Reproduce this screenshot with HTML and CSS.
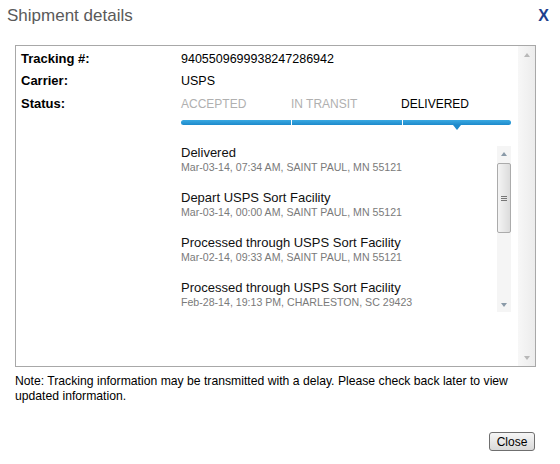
FILE: index.html
```html
<!DOCTYPE html>
<html>
<head>
<meta charset="utf-8">
<link rel="stylesheet" href="styles.css">
</head>
<body>
<div class="dialog">
  <div class="header">
    <h1 class="title">Shipment details</h1>
    <span class="close-x">X</span>
  </div>
  <div class="box">
    <div class="box-content">
      <div class="row"><div class="label">Tracking #:</div><div class="value">9405509699938247286942</div></div>
      <div class="row"><div class="label">Carrier:</div><div class="value">USPS</div></div>
      <div class="row status-row">
        <div class="label">Status:</div>
        <div class="value status">
          <div class="steps">
            <span class="step">ACCEPTED</span>
            <span class="step">IN TRANSIT</span>
            <span class="step current">DELIVERED</span>
          </div>
          <div class="bar">
            <span class="seg first"></span>
            <span class="seg"></span>
            <span class="seg last current"></span>
          </div>
          <div class="events-wrap">
            <div class="events">
              <div class="event">
                <div class="ev-title">Delivered</div>
                <div class="ev-sub">Mar-03-14, 07:34 AM, SAINT PAUL, MN 55121</div>
              </div>
              <div class="event">
                <div class="ev-title">Depart USPS Sort Facility</div>
                <div class="ev-sub">Mar-03-14, 00:00 AM, SAINT PAUL, MN 55121</div>
              </div>
              <div class="event">
                <div class="ev-title">Processed through USPS Sort Facility</div>
                <div class="ev-sub">Mar-02-14, 09:33 AM, SAINT PAUL, MN 55121</div>
              </div>
              <div class="event">
                <div class="ev-title">Processed through USPS Sort Facility</div>
                <div class="ev-sub">Feb-28-14, 19:13 PM, CHARLESTON, SC 29423</div>
              </div>
            </div>
            <div class="vscroll">
              <div class="sbtn"><span class="arr up"></span></div>
              <div class="thumb"><span class="grip"></span></div>
              <div class="track"></div>
              <div class="sbtn"><span class="arr down"></span></div>
            </div>
          </div>
        </div>
      </div>
    </div>
    <div class="outer-scroll">
      <div class="sbtn"><span class="arr up light"></span></div>
      <div class="track"></div>
      <div class="sbtn"><span class="arr down light"></span></div>
    </div>
  </div>
  <p class="note">Note: Tracking information may be transmitted with a delay. Please check back later to view updated information.</p>
  <div class="footer"><button class="btn">Close</button></div>
</div>
</body>
</html>
```
FILE: styles.css
```css
html, body {
  margin: 0;
  padding: 0;
  background: #fff;
}
body {
  font-family: "Liberation Sans", Arial, sans-serif;
  color: #000;
}
.dialog {
  width: 560px;
  height: 464px;
  box-sizing: border-box;
}
.header {
  display: flex;
  justify-content: space-between;
  align-items: flex-start;
  height: 45px;
  box-sizing: border-box;
  padding: 6px 11px 0 7px;
}
.title {
  margin: 0;
  font-size: 17px;
  line-height: 20px;
  font-weight: normal;
  color: #5a5a5a;
}
.close-x {
  font-size: 16px;
  font-weight: bold;
  line-height: 18px;
  margin-top: 1px;
  color: #1d3f8e;
}
.box {
  margin: 0 24px 0 15px;
  height: 322px;
  box-sizing: border-box;
  border: 1px solid #a8a8a8;
  display: flex;
}
.box-content {
  flex: 1;
  padding: 2px 0 0 5px;
}
.row {
  display: flex;
  line-height: 22px;
}
.status-row {
  margin-top: 1px;
}
.label {
  width: 160px;
  flex: none;
  font-size: 13px;
  font-weight: bold;
}
.value {
  font-size: 12.5px;
}
.status {
  width: 330px;
}
.steps {
  display: grid;
  grid-template-columns: 110px 110px 110px;
  font-size: 12px;
  line-height: 22px;
}
.step {
  color: #b0b0b0;
}
.step.current {
  color: #000;
}
.bar {
  display: flex;
  gap: 1px;
  height: 5px;
  margin-top: 5px;
}
.seg {
  flex: 1;
  background: linear-gradient(#3aa9e2, #1d8acb);
  position: relative;
}
.seg.first {
  border-radius: 3px 0 0 3px;
}
.seg.last {
  border-radius: 0 3px 3px 0;
  flex: 0 0 108px;
}
.seg.current::after {
  content: "";
  position: absolute;
  left: 50%;
  top: 5px;
  margin-left: -4px;
  border-left: 4px solid transparent;
  border-right: 4px solid transparent;
  border-top: 5px solid #1d8acb;
}
.events-wrap {
  display: flex;
  margin-top: 20px;
  height: 167px;
  line-height: normal;
}
.events {
  flex: 1;
  overflow: hidden;
}
.event {
  margin-bottom: 15px;
}
.ev-title {
  font-size: 13px;
  line-height: 15px;
  color: #111;
}
.ev-sub {
  font-size: 10.6px;
  line-height: 15px;
  color: #7a7a7a;
}
.vscroll {
  width: 14px;
  margin-top: 1px;
  height: 166px;
  display: flex;
  flex-direction: column;
  background: #f5f5f5;
}
.sbtn {
  height: 15px;
  display: flex;
  align-items: center;
  justify-content: center;
}
.arr {
  width: 0;
  height: 0;
  border-left: 3px solid transparent;
  border-right: 3px solid transparent;
}
.arr.up {
  border-bottom: 4px solid #8a9aa8;
}
.arr.down {
  border-top: 4px solid #8a9aa8;
}
.arr.light.up {
  border-bottom-color: #b8b8b8;
}
.arr.light.down {
  border-top-color: #b8b8b8;
}
.thumb {
  height: 70px;
  margin-top: 2px;
  box-sizing: border-box;
  border: 1px solid #ababab;
  border-radius: 2px;
  background: linear-gradient(90deg, #f4f4f4, #dcdcdc);
  display: flex;
  align-items: center;
  justify-content: center;
}
.grip {
  width: 6px;
  height: 5px;
  border-top: 1px solid #777;
  border-bottom: 1px solid #777;
  box-sizing: border-box;
  background: linear-gradient(#fff 1px, #777 1px, #777 2px, #fff 2px);
  background-clip: content-box;
  padding: 1px 0;
}
.track {
  flex: 1;
}
.outer-scroll {
  width: 17px;
  display: flex;
  flex-direction: column;
  background: linear-gradient(90deg, #f7f7f7, #ececec);
}
.outer-scroll .sbtn {
  height: 17px;
}
.note {
  margin: 7px 24px 0 15px;
  font-size: 12.2px;
  line-height: 15px;
  color: #000;
}
.footer {
  display: flex;
  justify-content: flex-end;
  padding: 28px 25px 0 0;
}
.btn {
  width: 46px;
  height: 19px;
  padding: 0;
  font-family: "Liberation Sans", Arial, sans-serif;
  font-size: 12px;
  color: #000;
  border: 1px solid #6f6f6f;
  border-radius: 3px;
  background: linear-gradient(#f6f6f6, #d9d9d9);
}
```
